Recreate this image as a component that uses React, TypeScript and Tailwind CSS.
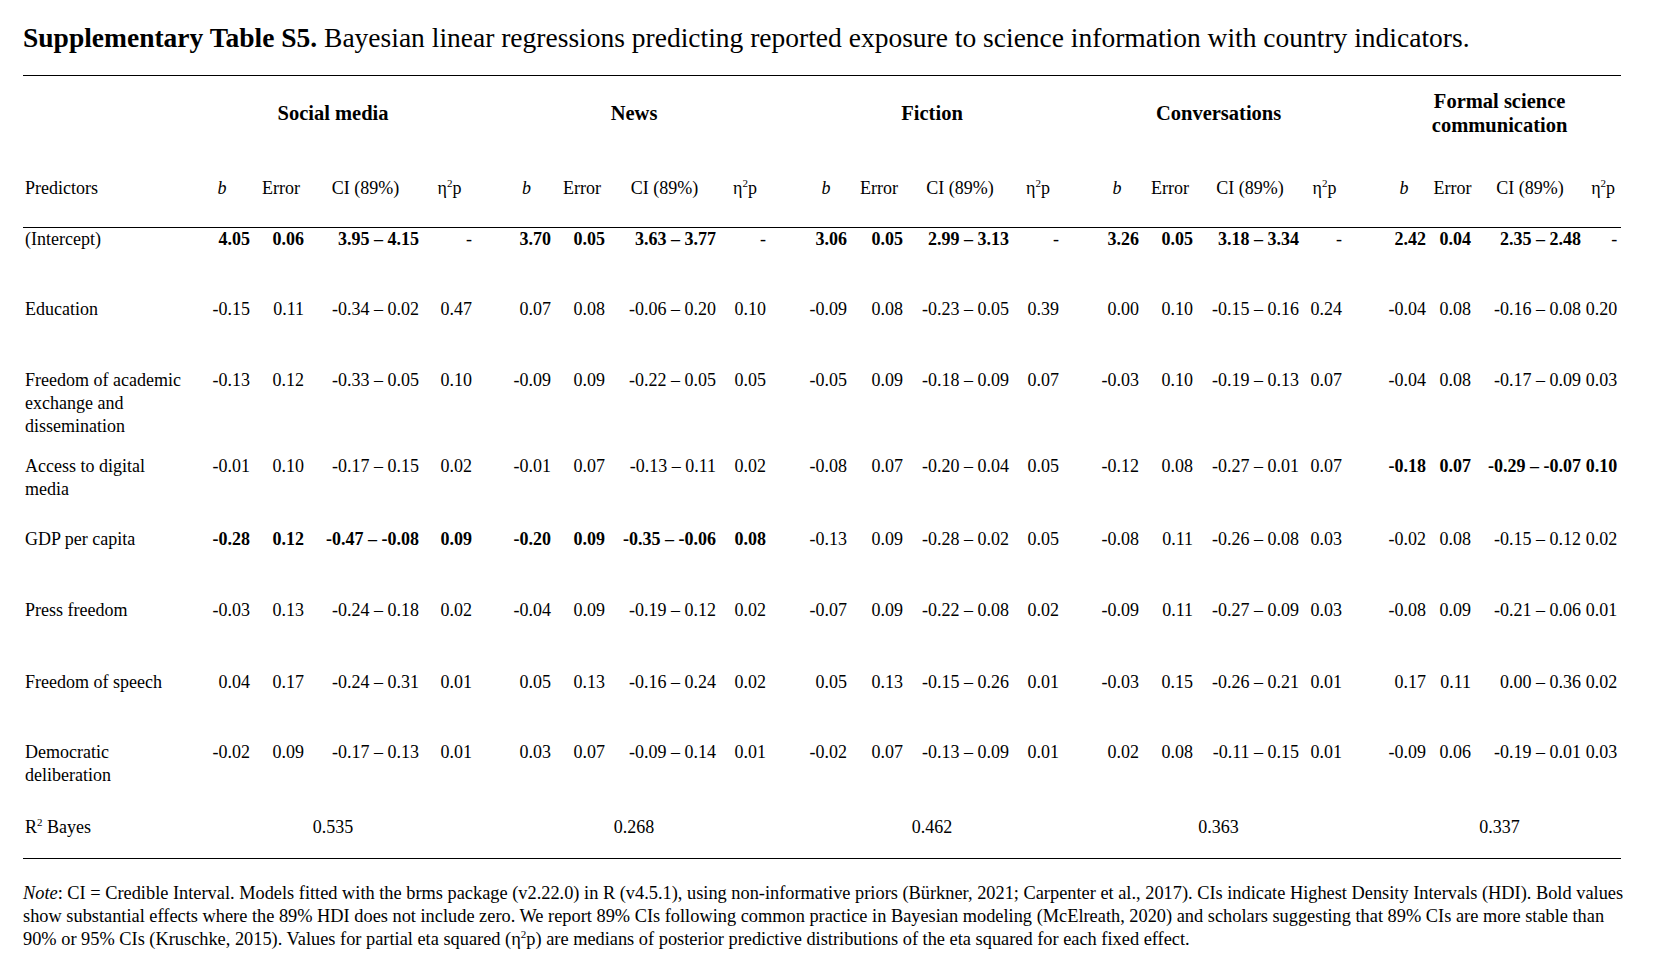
import React from "react";

type G = [string, string, string, string, number];

const rows: { label: React.ReactNode; h: string; pt: string; g: G[] }[] = [
  {
    label: "(Intercept)",
    h: "h-[69px]",
    pt: "pt-0",
    g: [
      ["4.05", "0.06", "3.95 – 4.15", "-", 1],
      ["3.70", "0.05", "3.63 – 3.77", "-", 1],
      ["3.06", "0.05", "2.99 – 3.13", "-", 1],
      ["3.26", "0.05", "3.18 – 3.34", "-", 1],
      ["2.42", "0.04", "2.35 – 2.48", "-", 1],
    ],
  },
  {
    label: "Education",
    h: "h-[71px]",
    pt: "pt-[1px]",
    g: [
      ["-0.15", "0.11", "-0.34 – 0.02", "0.47", 0],
      ["0.07", "0.08", "-0.06 – 0.20", "0.10", 0],
      ["-0.09", "0.08", "-0.23 – 0.05", "0.39", 0],
      ["0.00", "0.10", "-0.15 – 0.16", "0.24", 0],
      ["-0.04", "0.08", "-0.16 – 0.08", "0.20", 0],
    ],
  },
  {
    label: (
      <>
        Freedom of academic
        <br />
        exchange and
        <br />
        dissemination
      </>
    ),
    h: "h-[86px]",
    pt: "pt-[1px]",
    g: [
      ["-0.13", "0.12", "-0.33 – 0.05", "0.10", 0],
      ["-0.09", "0.09", "-0.22 – 0.05", "0.05", 0],
      ["-0.05", "0.09", "-0.18 – 0.09", "0.07", 0],
      ["-0.03", "0.10", "-0.19 – 0.13", "0.07", 0],
      ["-0.04", "0.08", "-0.17 – 0.09", "0.03", 0],
    ],
  },
  {
    label: (
      <>
        Access to digital
        <br />
        media
      </>
    ),
    h: "h-[73px]",
    pt: "pt-[1px]",
    g: [
      ["-0.01", "0.10", "-0.17 – 0.15", "0.02", 0],
      ["-0.01", "0.07", "-0.13 – 0.11", "0.02", 0],
      ["-0.08", "0.07", "-0.20 – 0.04", "0.05", 0],
      ["-0.12", "0.08", "-0.27 – 0.01", "0.07", 0],
      ["-0.18", "0.07", "-0.29 – -0.07", "0.10", 2],
    ],
  },
  {
    label: "GDP per capita",
    h: "h-[71px]",
    pt: "pt-[1px]",
    g: [
      ["-0.28", "0.12", "-0.47 – -0.08", "0.09", 2],
      ["-0.20", "0.09", "-0.35 – -0.06", "0.08", 2],
      ["-0.13", "0.09", "-0.28 – 0.02", "0.05", 0],
      ["-0.08", "0.11", "-0.26 – 0.08", "0.03", 0],
      ["-0.02", "0.08", "-0.15 – 0.12", "0.02", 0],
    ],
  },
  {
    label: "Press freedom",
    h: "h-[72px]",
    pt: "pt-[1px]",
    g: [
      ["-0.03", "0.13", "-0.24 – 0.18", "0.02", 0],
      ["-0.04", "0.09", "-0.19 – 0.12", "0.02", 0],
      ["-0.07", "0.09", "-0.22 – 0.08", "0.02", 0],
      ["-0.09", "0.11", "-0.27 – 0.09", "0.03", 0],
      ["-0.08", "0.09", "-0.21 – 0.06", "0.01", 0],
    ],
  },
  {
    label: "Freedom of speech",
    h: "h-[70px]",
    pt: "pt-[1px]",
    g: [
      ["0.04", "0.17", "-0.24 – 0.31", "0.01", 0],
      ["0.05", "0.13", "-0.16 – 0.24", "0.02", 0],
      ["0.05", "0.13", "-0.15 – 0.26", "0.01", 0],
      ["-0.03", "0.15", "-0.26 – 0.21", "0.01", 0],
      ["0.17", "0.11", "0.00 – 0.36", "0.02", 0],
    ],
  },
  {
    label: (
      <>
        Democratic
        <br />
        deliberation
      </>
    ),
    h: "h-[74px]",
    pt: "pt-[1px]",
    g: [
      ["-0.02", "0.09", "-0.17 – 0.13", "0.01", 0],
      ["0.03", "0.07", "-0.09 – 0.14", "0.01", 0],
      ["-0.02", "0.07", "-0.13 – 0.09", "0.01", 0],
      ["0.02", "0.08", "-0.11 – 0.15", "0.01", 0],
      ["-0.09", "0.06", "-0.19 – 0.01", "0.03", 0],
    ],
  },
];

const groups: React.ReactNode[] = [
  "Social media",
  "News",
  "Fiction",
  "Conversations",
  <>
    Formal science
    <br />
    communication
  </>,
];

const r2 = ["0.535", "0.268", "0.462", "0.363", "0.337"];

const Eta = () => (
  <>
    η<sup className="text-[11px] top-[-7px]">2</sup>p
  </>
);

export default function App() {
  const num = "text-right pr-[4px] align-top whitespace-nowrap";
  return (
    <div className="w-[1657px] h-[968px] bg-white text-black font-['Liberation_Serif','Times_New_Roman',serif] pl-[23px] pt-[22px] overflow-hidden">
      <h1 className="text-[27.5px] leading-[31px] whitespace-nowrap">
        <span className="font-bold">Supplementary Table S5.</span> Bayesian linear regressions predicting
        reported exposure to science information with country indicators.
      </h1>

      <table className="mt-[22px] table-fixed border-collapse w-[1598px] text-[18px] leading-[23px]">
        <colgroup>
          <col className="w-[167px]" />
          <col className="w-[64px]" />
          <col className="w-[54px]" />
          <col className="w-[115px]" />
          <col className="w-[53px]" />
          <col className="w-[22px]" />
          <col className="w-[57px]" />
          <col className="w-[54px]" />
          <col className="w-[111px]" />
          <col className="w-[50px]" />
          <col className="w-[31px]" />
          <col className="w-[50px]" />
          <col className="w-[56px]" />
          <col className="w-[106px]" />
          <col className="w-[50px]" />
          <col className="w-[28px]" />
          <col className="w-[52px]" />
          <col className="w-[54px]" />
          <col className="w-[106px]" />
          <col className="w-[43px]" />
          <col className="w-[32px]" />
          <col className="w-[52px]" />
          <col className="w-[45px]" />
          <col className="w-[110px]" />
          <col className="w-[36px]" />
        </colgroup>
        <thead>
          <tr className="h-[75px] border-t border-black">
            <th className="p-0"></th>
            {groups.map((g, i) => (
              <React.Fragment key={i}>
                {i > 0 && <th className="p-0"></th>}
                <th colSpan={4} className="p-0 text-center align-middle font-bold text-[20.5px] leading-[24.5px]">
                  {g}
                </th>
              </React.Fragment>
            ))}
          </tr>
          <tr className="h-[77px] border-b border-black">
            <th className="p-0 pl-[2px] text-left font-normal align-middle">Predictors</th>
            {groups.map((_, i) => (
              <React.Fragment key={i}>
                {i > 0 && <th className="p-0"></th>}
                <th className="p-0 font-normal italic text-center align-middle">b</th>
                <th className="p-0 font-normal text-center align-middle">Error</th>
                <th className="p-0 font-normal text-center align-middle whitespace-nowrap">CI (89%)</th>
                <th className="p-0 font-normal text-center align-middle whitespace-nowrap">
                  <Eta />
                </th>
              </React.Fragment>
            ))}
          </tr>
        </thead>
        <tbody>
          {rows.map((r, ri) => (
            <tr key={ri} className={r.h}>
              <td className={`p-0 pl-[2px] ${r.pt} align-top whitespace-nowrap`}>{r.label}</td>
              {r.g.map((g, gi) => {
                const b3 = g[4] >= 1 ? "font-bold" : "";
                const b4 = g[4] === 2 ? "font-bold" : "";
                return (
                  <React.Fragment key={gi}>
                    {gi > 0 && <td className="p-0"></td>}
                    <td className={`p-0 ${r.pt} ${num} ${b3}`}>{g[0]}</td>
                    <td className={`p-0 ${r.pt} ${num} ${b3}`}>{g[1]}</td>
                    <td className={`p-0 ${r.pt} ${num} ${b3}`}>{g[2]}</td>
                    <td className={`p-0 ${r.pt} ${num} ${b4}`}>{g[3]}</td>
                  </React.Fragment>
                );
              })}
            </tr>
          ))}
          <tr className="h-[45px] border-b border-black">
            <td className="p-0 pl-[2px] pt-[2px] align-top whitespace-nowrap">
              R<sup className="text-[11px] top-[-7px]">2</sup> Bayes
            </td>
            {r2.map((v, i) => (
              <React.Fragment key={i}>
                {i > 0 && <td className="p-0"></td>}
                <td colSpan={4} className="p-0 pt-[2px] text-center align-top">
                  {v}
                </td>
              </React.Fragment>
            ))}
          </tr>
        </tbody>
      </table>

      <div className="mt-[23px] text-[18.35px] leading-[23px] whitespace-nowrap">
        <div>
          <span className="italic">Note</span>: CI = Credible Interval. Models fitted with the brms package (v2.22.0) in R
          (v4.5.1), using non-informative priors (Bürkner, 2021; Carpenter et al., 2017). CIs indicate Highest Density
          Intervals (HDI). Bold values
        </div>
        <div>
          show substantial effects where the 89% HDI does not include zero. We report 89% CIs following common practice in
          Bayesian modeling (McElreath, 2020) and scholars suggesting that 89% CIs are more stable than
        </div>
        <div>
          90% or 95% CIs (Kruschke, 2015). Values for partial eta squared (η<sup className="text-[11px] top-[-7px]">2</sup>p)
          are medians of posterior predictive distributions of the eta squared for each fixed effect.
        </div>
      </div>
    </div>
  );
}
